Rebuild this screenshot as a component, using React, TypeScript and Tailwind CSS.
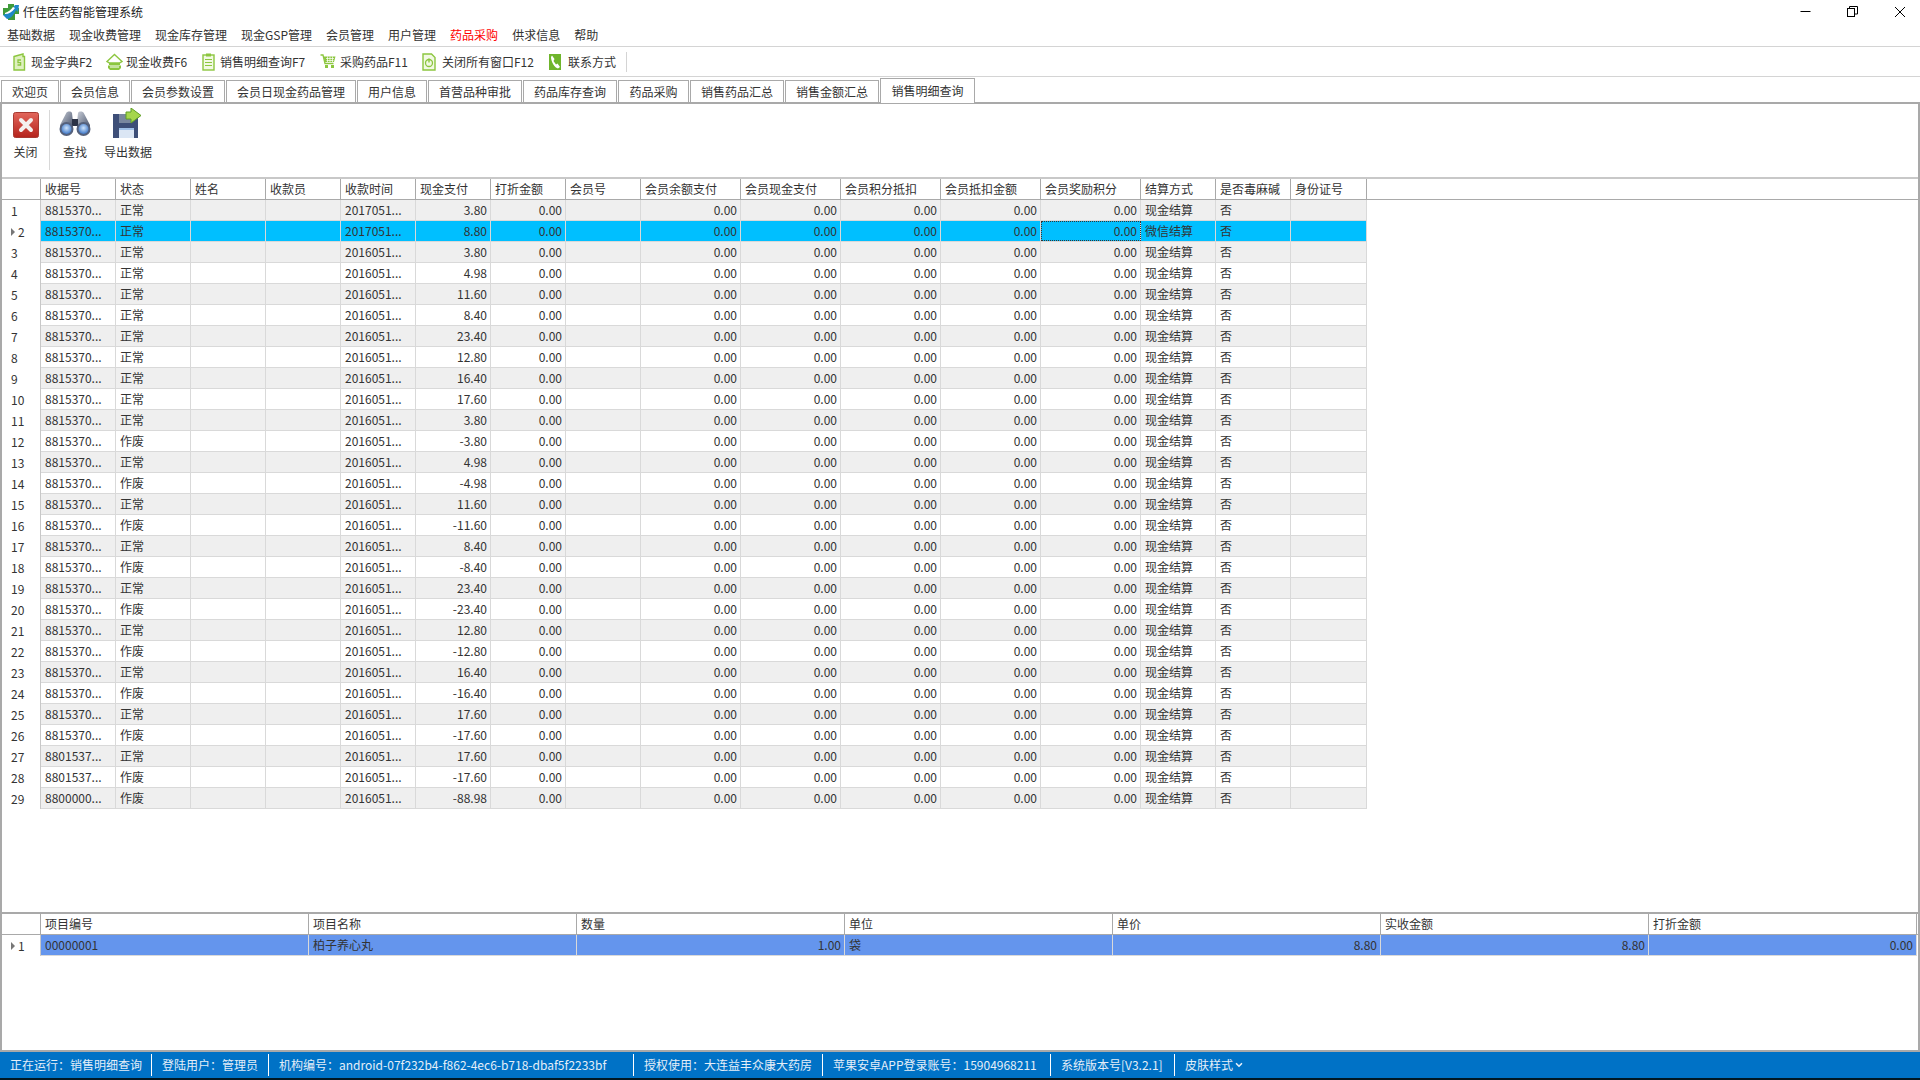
import { ChevronDown } from 'lucide-react';

const font = 'font-["Microsoft_YaHei","Noto_Sans_CJK_SC","Noto_Sans",sans-serif]';

const menus = ['基础数据', '现金收费管理', '现金库存管理', '现金GSP管理', '会员管理', '用户管理', '药品采购', '供求信息', '帮助'];

const tabs = [
  { label: '欢迎页', w: 'w-[58px]' },
  { label: '会员信息', w: 'w-[70px]' },
  { label: '会员参数设置', w: 'w-[94px]' },
  { label: '会员日现金药品管理', w: 'w-[130px]' },
  { label: '用户信息', w: 'w-[70px]' },
  { label: '首营品种审批', w: 'w-[94px]' },
  { label: '药品库存查询', w: 'w-[94px]' },
  { label: '药品采购', w: 'w-[71px]' },
  { label: '销售药品汇总', w: 'w-[94px]' },
  { label: '销售金额汇总', w: 'w-[94px]' },
];

const columns = [
  { label: '收据号', w: 'w-[75px]' },
  { label: '状态', w: 'w-[75px]' },
  { label: '姓名', w: 'w-[75px]' },
  { label: '收款员', w: 'w-[75px]' },
  { label: '收款时间', w: 'w-[75px]' },
  { label: '现金支付', w: 'w-[75px]', right: true },
  { label: '打折金额', w: 'w-[75px]', right: true },
  { label: '会员号', w: 'w-[75px]' },
  { label: '会员余额支付', w: 'w-[100px]', right: true },
  { label: '会员现金支付', w: 'w-[100px]', right: true },
  { label: '会员积分抵扣', w: 'w-[100px]', right: true },
  { label: '会员抵扣金额', w: 'w-[100px]', right: true },
  { label: '会员奖励积分', w: 'w-[100px]', right: true },
  { label: '结算方式', w: 'w-[75px]' },
  { label: '是否毒麻碱', w: 'w-[75px]' },
  { label: '身份证号', w: 'w-[76px]' },
];

const amounts = ['3.80', '8.80', '3.80', '4.98', '11.60', '8.40', '23.40', '12.80', '16.40', '17.60', '3.80', '-3.80', '4.98', '-4.98', '11.60', '-11.60', '8.40', '-8.40', '23.40', '-23.40', '12.80', '-12.80', '16.40', '-16.40', '17.60', '-17.60', '17.60', '-17.60', '-88.98'];

const rows = amounts.map((amount, i) => {
  const no = i + 1;
  return [
    no >= 29 ? '8800000...' : no >= 27 ? '8801537...' : '8815370...',
    amount.startsWith('-') ? '作废' : '正常',
    '',
    '',
    no <= 2 ? '2017051...' : '2016051...',
    amount,
    '0.00',
    '',
    '0.00',
    '0.00',
    '0.00',
    '0.00',
    '0.00',
    no === 2 ? '微信结算' : '现金结算',
    '否',
    '',
  ];
});

const detailColumns = [
  { label: '项目编号', value: '00000001' },
  { label: '项目名称', value: '柏子养心丸' },
  { label: '数量', value: '1.00', right: true },
  { label: '单位', value: '袋' },
  { label: '单价', value: '8.80', right: true },
  { label: '实收金额', value: '8.80', right: true },
  { label: '打折金额', value: '0.00', right: true },
];

const statusItems = [
  { text: '正在运行：销售明细查询', w: 'w-[152px]' },
  { text: '登陆用户：管理员', w: 'w-[117px]' },
  { text: '机构编号：android-07f232b4-f862-4ec6-b718-dbaf5f2233bf', w: 'w-[365px]' },
  { text: '授权使用：大连益丰众康大药房', w: 'w-[189px]' },
  { text: '苹果安卓APP登录账号：15904968211', w: 'w-[228px]' },
  { text: '系统版本号[V3.2.1]', w: 'w-[124px]' },
];

function Logo() {
  return (
    <svg width="18" height="18" viewBox="0 0 18 18">
      <path d="M6 1h6l0 4h5v6l-4 0v6H6v-5H1V5h5z" fill="#3f9b3a" />
      <path d="M1 12c4-1 8-4 12-10l-3 0 7 0-1 7-2-2c-2 5-6 9-9 9z" fill="#1e88c9" />
      <path d="M3 10c3-1 6-3 8-6l2 1c-3 4-6 6-10 6z" fill="#fff" />
    </svg>
  );
}

function StripIcon({ name }: { name: string }) {
  const green = '#8cc63f';
  if (name === 'dict')
    return (
      <svg width="16" height="18" viewBox="0 0 16 18">
        <path d="M3 3.5 12 1v2.5h1.5V17H3z" fill="#dff0c0" stroke={green} strokeWidth="1.4" />
        <path d="M10 7H7v2.6h2.6V12H6.5" fill="none" stroke={green} strokeWidth="1.3" />
      </svg>
    );
  if (name === 'cash')
    return (
      <svg width="17" height="18" viewBox="0 0 17 18">
        <path d="M8.5 1.5 16 8.5 13.5 10H3.500L1 8.500z" fill="#fff" stroke={green} strokeWidth="1.4" />
        <path d="M3 10h11v2H3zM2 12.500h13v2.500l-2 2H4l-2-2z" fill={green} />
        <path d="M4 14h9" stroke="#fff" strokeWidth="1" />
      </svg>
    );
  if (name === 'list')
    return (
      <svg width="13" height="18" viewBox="0 0 13 18">
        <rect x="1" y="2" width="11" height="15" fill="#f2f9e4" stroke={green} strokeWidth="1.4" />
        <rect x="4" y="0.500" width="5" height="3" fill={green} />
        <path d="M3 6.500h7M3 9.500h7M3 12.500h7" stroke={green} strokeWidth="1.2" />
      </svg>
    );
  if (name === 'cart')
    return (
      <svg width="16" height="15" viewBox="0 0 16 15">
        <path d="M0.500 1H3l2 8.500h8.500" fill="none" stroke={green} strokeWidth="1.300" />
        <path d="M3.500 2.500H15.500L14 8H5z" fill={green} />
        <path d="M6 4.500h8M6.500 6.500h7M7.500 2.500v5.500M10 2.500v5.500M12.500 2.500v5.500" stroke="#fff" strokeWidth="0.700" />
        <rect x="5" y="11" width="3" height="3" fill={green} />
        <rect x="11" y="11" width="3" height="3" fill={green} />
      </svg>
    );
  if (name === 'power')
    return (
      <svg width="14" height="18" viewBox="0 0 14 18">
        <path d="M1 1h8.500L13 4.500V17H1z" fill="#f2f9e4" stroke={green} strokeWidth="1.400" />
        <circle cx="7" cy="10" r="3.500" fill="none" stroke={green} strokeWidth="1.300" />
        <path d="M7 5.500v4" stroke={green} strokeWidth="1.400" />
      </svg>
    );
  return (
    <svg width="12" height="18" viewBox="0 0 12 18">
      <rect x="0" y="1" width="12" height="16" fill="#6fb52c" />
      <path d="M3 2.500 5.500 6 4.500 8 7 11.500 8.500 10.500 11 14 9 15.500C6 15 2 9 2 4z" fill="#fff" />
    </svg>
  );
}

function CloseIcon() {
  return (
    <svg width="26" height="26" viewBox="0 0 26 26">
      <defs>
        <linearGradient id="closeFill" x1="0" y1="0" x2="0" y2="1">
          <stop offset="0" stopColor="#e2675c" />
          <stop offset="1" stopColor="#b5231c" />
        </linearGradient>
      </defs>
      <rect x="0.500" y="0.500" width="25" height="25" rx="2" fill="url(#closeFill)" stroke="#a83a32" />
      <path d="M8 8l10 10M18 8 8 18" stroke="#f4f0ee" strokeWidth="4" strokeLinecap="round" />
    </svg>
  );
}

function BinocularsIcon() {
  return (
    <svg width="32" height="28" viewBox="0 0 32 28">
      <defs>
        <linearGradient id="binoBody" x1="0" y1="0" x2="1" y2="1">
          <stop offset="0" stopColor="#c9ced8" />
          <stop offset="1" stopColor="#3f4a63" />
        </linearGradient>
        <radialGradient id="binoLens" cx="0.500" cy="0.400" r="0.600">
          <stop offset="0" stopColor="#cfe4fb" />
          <stop offset="1" stopColor="#3f78c8" />
        </radialGradient>
      </defs>
      <path d="M7 3.500C8 1 12 1 13 3l1 9v8H1v-5z" fill="url(#binoBody)" />
      <path d="M25 3.500C24 1 20 1 19 3l-1 9v8h13v-5z" fill="url(#binoBody)" />
      <rect x="13" y="9" width="6" height="7" fill="#2c3347" />
      <circle cx="7.500" cy="19" r="7" fill="#55617c" />
      <circle cx="24.500" cy="19" r="7" fill="#55617c" />
      <circle cx="7.500" cy="19" r="5" fill="url(#binoLens)" />
      <circle cx="24.500" cy="19" r="5" fill="url(#binoLens)" />
    </svg>
  );
}

function ExportIcon() {
  return (
    <svg width="30" height="30" viewBox="0 0 30 30">
      <path d="M0 6h23l2 2v22H0z" fill="#3e4f78" />
      <rect x="6" y="6" width="13" height="9" fill="#79879f" />
      <rect x="6" y="20" width="15" height="10" fill="#dbe6f4" />
      <rect x="6" y="20" width="15" height="2" fill="#9fc0e8" />
      <path d="M13 4h5V0l10 7.500L18 15v-4h-5z" fill="#a5d64c" stroke="#5f9e26" />
    </svg>
  );
}

function Cell({ text, w, right }: { text: string; w: string; right?: boolean }) {
  return (
    <div className={`${w} shrink-0 h-full overflow-hidden whitespace-nowrap border-r border-[#d9d9d9] pl-[4px] pr-[3px] ${right ? 'text-right' : 'text-left'}`}>
      {text}
    </div>
  );
}

function Arrow() {
  return <span className="mr-[3px] ml-[9px] h-0 w-0 border-y-[4px] border-l-[4px] border-y-transparent border-l-[#777]" />;
}

export default function App() {
  return (
    <div className={`${font} flex h-[1080px] w-[1920px] flex-col overflow-hidden bg-white text-[12px] leading-[20px] text-[#333]`}>
      {/* title bar */}
      <div className="flex h-[23px] shrink-0 items-center pl-[2px] text-[#222]">
        <Logo />
        <span className="ml-[3px]">仟佳医药智能管理系统</span>
        <div className="ml-auto flex items-center gap-[36px] pr-[14px]">
          <svg width="11" height="11" viewBox="0 0 11 11"><path d="M0.500 5.500h10" stroke="#000" /></svg>
          <svg width="11" height="11" viewBox="0 0 11 11" fill="none" stroke="#000"><rect x="0.500" y="2.500" width="7" height="8" /><path d="M2.500 2.500v-2h8v7.500h-3" /></svg>
          <svg width="12" height="12" viewBox="0 0 12 12"><path d="M1 1l10 10M11 1 1 11" stroke="#000" /></svg>
        </div>
      </div>

      {/* menu */}
      <div className="flex h-[24px] shrink-0 items-center border-b border-[#d4d4d4]">
        {menus.map((m, i) => (
          <span key={m} className={`px-[7px] ${i === 6 ? 'text-[#f00]' : ''}`}>{m}</span>
        ))}
      </div>

      {/* quick toolbar */}
      <div className="flex h-[30px] shrink-0 items-center border-b border-[#d4d4d4] pl-[11px]">
        <div className="flex w-[95px] items-center"><div className="flex w-[20px] justify-start"><StripIcon name="dict" /></div><span>现金字典F2</span></div>
        <div className="flex w-[96px] items-center"><div className="flex w-[20px] justify-start"><StripIcon name="cash" /></div><span>现金收费F6</span></div>
        <div className="flex w-[118px] items-center"><div className="flex w-[18px] justify-start"><StripIcon name="list" /></div><span>销售明细查询F7</span></div>
        <div className="flex w-[102px] items-center"><div className="flex w-[20px] justify-start"><StripIcon name="cart" /></div><span>采购药品F11</span></div>
        <div className="flex w-[127px] items-center"><div className="flex w-[20px] justify-start"><StripIcon name="power" /></div><span>关闭所有窗口F12</span></div>
        <div className="flex w-[78px] items-center border-r border-[#d4d4d4]"><div className="flex w-[19px] justify-start"><StripIcon name="phone" /></div><span>联系方式</span></div>
      </div>

      {/* tabs */}
      <div className="relative flex h-[25px] shrink-0 items-end gap-[1px] pl-[1px]">
        {tabs.map((t) => (
          <div key={t.label} className={`${t.w} flex h-[22px] items-center justify-center border border-b-0 border-[#a9a9a9] bg-white`}>{t.label}</div>
        ))}
        <div className="z-10 -mb-px flex h-[25px] w-[95px] items-center justify-center border border-b-0 border-[#a9a9a9] bg-white">销售明细查询</div>
      </div>

      {/* page */}
      <div className="flex min-h-0 flex-1 flex-col border-x-2 border-t-2 border-[#a9a9a9]">
        {/* action bar */}
        <div className="flex h-[75px] shrink-0 border-b-2 border-[#c8c8c8] pt-[6px]">
          <div className="flex h-[60px] w-[48px] flex-col items-center border-r border-[#d8d8d8] pl-[0px]">
            <div className="flex h-[28px] items-end"><CloseIcon /></div>
            <span className="mt-[4px]">关闭</span>
          </div>
          <div className="flex h-[60px] w-[50px] flex-col items-center">
            <div className="flex h-[28px] items-end"><BinocularsIcon /></div>
            <span className="mt-[4px]">查找</span>
          </div>
          <div className="flex h-[60px] w-[56px] flex-col items-center">
            <div className="flex h-[28px] items-end"><ExportIcon /></div>
            <span className="mt-[4px]">导出数据</span>
          </div>
        </div>

        {/* receipts grid */}
        <div className="flex min-h-0 flex-1 flex-col border-b-2 border-[#a9a9a9]">
          <div className="flex h-[21px] shrink-0 border-b-[1px] border-[#a9a9a9]">
            <div className="h-full w-[39px] shrink-0 border-r border-[#a9a9a9]" />
            {columns.map((c) => (
              <div key={c.label} className={`${c.w} h-full shrink-0 overflow-hidden whitespace-nowrap border-r border-[#a9a9a9] pl-[4px]`}>{c.label}</div>
            ))}
          </div>
          {rows.map((row, i) => {
            const selected = i === 1;
            const bg = selected ? 'bg-[#00bfff]' : i % 2 === 0 ? 'bg-[#efefef]' : 'bg-white';
            return (
              <div key={i} className="flex h-[21px] shrink-0">
                <div className="flex h-full w-[39px] shrink-0 items-center border-r border-[#c8c8c8]">
                  {selected ? <><Arrow /><span>{i + 1}</span></> : <span className="pl-[9px]">{i + 1}</span>}
                </div>
                <div className={`flex h-full border-b border-[#d9d9d9] ${bg}`}>
                  {row.map((v, j) => (
                    <div key={j} className="relative h-full">
                      <Cell text={v} w={columns[j].w} right={columns[j].right} />
                      {selected && j === 12 && <div className="absolute inset-0 border border-dotted border-[#333]" />}
                    </div>
                  ))}
                </div>
              </div>
            );
          })}
        </div>

        {/* detail grid */}
        <div className="flex h-[138px] shrink-0 flex-col border-b-2 border-[#a9a9a9]">
          <div className="flex h-[21px] shrink-0 border-b border-[#a9a9a9]">
            <div className="h-full w-[39px] shrink-0 border-r border-[#a9a9a9]" />
            {detailColumns.map((c) => (
              <div key={c.label} className="h-full w-[268px] shrink-0 border-r border-[#a9a9a9] pl-[4px]">{c.label}</div>
            ))}
          </div>
          <div className="flex h-[21px] shrink-0">
            <div className="flex h-full w-[39px] shrink-0 items-center border-r border-[#c8c8c8]"><Arrow /><span>1</span></div>
            <div className="flex h-full border-b border-[#d9d9d9] bg-[#6495ed]">
              {detailColumns.map((c) => (
                <Cell key={c.label} text={c.value} w="w-[268px]" right={c.right} />
              ))}
            </div>
          </div>
        </div>
      </div>

      {/* status bar */}
      <div className="flex h-[26px] shrink-0 items-center bg-[#0072c6] text-[#e4eef8]">
        {statusItems.map((s) => (
          <div key={s.text} className={`${s.w} flex h-[22px] shrink-0 items-center whitespace-nowrap border-r border-white pl-[10px]`}>{s.text}</div>
        ))}
        <div className="flex items-center pl-[10px]">皮肤样式<ChevronDown size={10} strokeWidth={4} className="ml-[1px]" /></div>
      </div>
      <div className="h-[2px] shrink-0 bg-[#001824]" />
    </div>
  );
}
